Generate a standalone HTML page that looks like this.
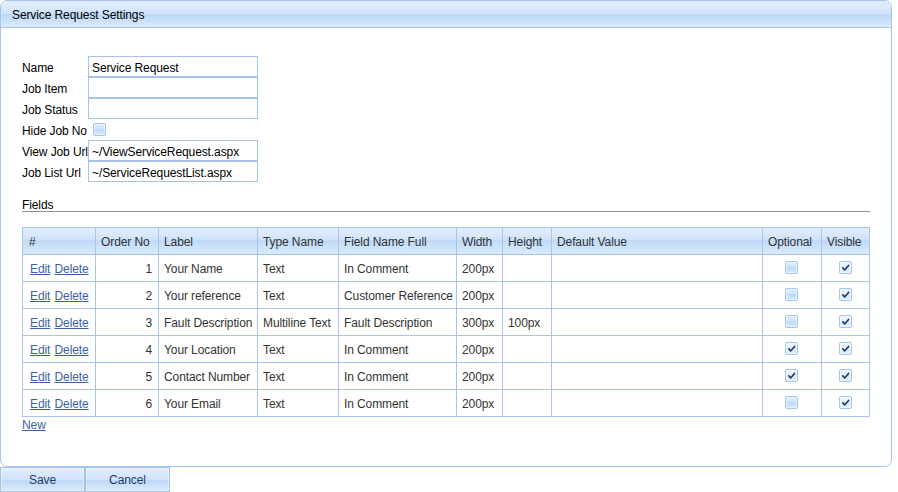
<!DOCTYPE html>
<html>
<head>
<meta charset="utf-8">
<style>
html,body{margin:0;padding:0;}
body{width:898px;height:492px;overflow:hidden;background:#fff;position:relative;
  font-family:"Liberation Sans",sans-serif;font-size:12px;letter-spacing:-0.1px;color:#000;}
.abs{position:absolute;}
.panel{position:absolute;left:0;top:0;width:890px;height:465px;border:1px solid #a5c3ec;
  border-radius:7px;background:#fff;overflow:hidden;}
.hdr{position:absolute;left:0;top:0;width:890px;height:26px;border-bottom:1px solid #a5c3ec;
  background:linear-gradient(to bottom,#e3eefd 0px,#d9e8fc 7px,#d0e3fa 13px,#bcd7f6 13px,#c6def8 18px,#dcebfd 26px);}
.hdr span{position:absolute;left:11px;top:1px;line-height:27px;color:#000;}
.lbl{position:absolute;left:22px;height:21px;line-height:21px;white-space:nowrap;}
.inp{position:absolute;left:88px;width:168px;height:19px;border:1px solid #a8c3ea;background:#fff;}
.inp span{position:absolute;left:3px;top:1px;line-height:20px;white-space:nowrap;}
.cb{position:absolute;width:11px;height:11px;border:1px solid #a3c6ee;border-radius:2px;
  background:linear-gradient(to bottom,#dfecfd 0px,#d0e4fb 5px,#b9d6f7 5px,#c5ddf9 7px,#d9e9fc 11px);box-shadow:inset 0 0 0 1px rgba(255,255,255,0.5);}
.cb svg{position:absolute;left:0;top:0;}
.cb.v{background:linear-gradient(to bottom,#eef5fd 0px,#e4eefc 5px,#d8e7fa 6px,#e2edfc 11px);}
.fields{position:absolute;left:22px;top:198px;line-height:14px;}
.fline{position:absolute;left:22px;top:211px;width:848px;height:1px;background:#939393;}
table.g{position:absolute;left:22px;top:227px;border-collapse:collapse;table-layout:fixed;}
table.g td,table.g th{border:1px solid #a9c4ea;padding:2px 0 0 5px;height:24px;font-weight:normal;
  text-align:left;white-space:nowrap;overflow:hidden;color:#333;line-height:24px;position:relative;}
table.g th{background:linear-gradient(to bottom,#e3eefd 0px,#d9e8fc 6px,#d0e3fa 11px,#bed8f6 12px,#c8dff8 16px,#dcebfd 26px);color:#333;}
table.g td.r{text-align:right;padding:2px 6px 0 0;}
table.g th:first-child{padding-left:6px;}
table.g td:first-child{padding-left:7px;word-spacing:1px;}
a{color:#3d61a9;text-decoration:underline;}
.btn{position:absolute;top:467px;height:23px;width:83px;border:1px solid #a8c3ea;
  background:linear-gradient(to bottom,#e3eefd 0px,#d9e8fc 6px,#d0e3fa 12px,#bed8f6 12px,#c8dff8 16px,#dcebfd 23px);box-shadow:inset 0 0 0 1px rgba(255,255,255,0.35);
  text-align:center;line-height:24px;color:#1e3a6e;}
</style>
</head>
<body>
<div class="panel">
  <div class="hdr"><span>Service Request Settings</span></div>
</div>

<div class="lbl" style="top:58px">Name</div>
<div class="lbl" style="top:79px">Job Item</div>
<div class="lbl" style="top:100px">Job Status</div>
<div class="lbl" style="top:121px">Hide Job No</div>
<div class="lbl" style="top:142px">View Job Url</div>
<div class="lbl" style="top:163px">Job List Url</div>

<div class="inp" style="top:56px"><span>Service Request</span></div>
<div class="inp" style="top:77px"></div>
<div class="inp" style="top:98px"></div>
<div class="cb" style="left:93px;top:123px"></div>
<div class="inp" style="top:140px"><span>~/ViewServiceRequest.aspx</span></div>
<div class="inp" style="top:161px"><span>~/ServiceRequestList.aspx</span></div>

<div class="fields">Fields</div>
<div class="fline"></div>

<table class="g">
<colgroup>
<col style="width:73px"><col style="width:63px"><col style="width:99px"><col style="width:81px"><col style="width:118px"><col style="width:46px"><col style="width:49px"><col style="width:211px"><col style="width:59px"><col style="width:48px">
</colgroup>
<tr><th>#</th><th>Order No</th><th>Label</th><th>Type Name</th><th>Field Name Full</th><th>Width</th><th>Height</th><th>Default Value</th><th>Optional</th><th>Visible</th></tr>
<tr><td><a>Edit</a> <a>Delete</a></td><td class="r">1</td><td>Your Name</td><td>Text</td><td>In Comment</td><td>200px</td><td></td><td></td><td><div class="cb" style="left:22px;top:6px"></div></td><td><div class="cb v" style="left:17px;top:6px"><svg width="11" height="11" viewBox="0 0 11 11"><path d="M2.8 5.8 L4.6 8.0 L8.6 3.4" fill="none" stroke="#1d3c66" stroke-width="1.6" stroke-linecap="round" stroke-linejoin="round"/></svg></div></td></tr>
<tr><td><a>Edit</a> <a>Delete</a></td><td class="r">2</td><td>Your reference</td><td>Text</td><td>Customer Reference</td><td>200px</td><td></td><td></td><td><div class="cb" style="left:22px;top:6px"></div></td><td><div class="cb v" style="left:17px;top:6px"><svg width="11" height="11" viewBox="0 0 11 11"><path d="M2.8 5.8 L4.6 8.0 L8.6 3.4" fill="none" stroke="#1d3c66" stroke-width="1.6" stroke-linecap="round" stroke-linejoin="round"/></svg></div></td></tr>
<tr><td><a>Edit</a> <a>Delete</a></td><td class="r">3</td><td>Fault Description</td><td>Multiline Text</td><td>Fault Description</td><td>300px</td><td>100px</td><td></td><td><div class="cb" style="left:22px;top:6px"></div></td><td><div class="cb v" style="left:17px;top:6px"><svg width="11" height="11" viewBox="0 0 11 11"><path d="M2.8 5.8 L4.6 8.0 L8.6 3.4" fill="none" stroke="#1d3c66" stroke-width="1.6" stroke-linecap="round" stroke-linejoin="round"/></svg></div></td></tr>
<tr><td><a>Edit</a> <a>Delete</a></td><td class="r">4</td><td>Your Location</td><td>Text</td><td>In Comment</td><td>200px</td><td></td><td></td><td><div class="cb v" style="left:22px;top:6px"><svg width="11" height="11" viewBox="0 0 11 11"><path d="M2.8 5.8 L4.6 8.0 L8.6 3.4" fill="none" stroke="#1d3c66" stroke-width="1.6" stroke-linecap="round" stroke-linejoin="round"/></svg></div></td><td><div class="cb v" style="left:17px;top:6px"><svg width="11" height="11" viewBox="0 0 11 11"><path d="M2.8 5.8 L4.6 8.0 L8.6 3.4" fill="none" stroke="#1d3c66" stroke-width="1.6" stroke-linecap="round" stroke-linejoin="round"/></svg></div></td></tr>
<tr><td><a>Edit</a> <a>Delete</a></td><td class="r">5</td><td>Contact Number</td><td>Text</td><td>In Comment</td><td>200px</td><td></td><td></td><td><div class="cb v" style="left:22px;top:6px"><svg width="11" height="11" viewBox="0 0 11 11"><path d="M2.8 5.8 L4.6 8.0 L8.6 3.4" fill="none" stroke="#1d3c66" stroke-width="1.6" stroke-linecap="round" stroke-linejoin="round"/></svg></div></td><td><div class="cb v" style="left:17px;top:6px"><svg width="11" height="11" viewBox="0 0 11 11"><path d="M2.8 5.8 L4.6 8.0 L8.6 3.4" fill="none" stroke="#1d3c66" stroke-width="1.6" stroke-linecap="round" stroke-linejoin="round"/></svg></div></td></tr>
<tr><td><a>Edit</a> <a>Delete</a></td><td class="r">6</td><td>Your Email</td><td>Text</td><td>In Comment</td><td>200px</td><td></td><td></td><td><div class="cb" style="left:22px;top:6px"></div></td><td><div class="cb v" style="left:17px;top:6px"><svg width="11" height="11" viewBox="0 0 11 11"><path d="M2.8 5.8 L4.6 8.0 L8.6 3.4" fill="none" stroke="#1d3c66" stroke-width="1.6" stroke-linecap="round" stroke-linejoin="round"/></svg></div></td></tr>
</table>

<div class="abs" style="left:22px;top:418px;line-height:14px"><a>New</a></div>

<div class="btn" style="left:0">Save</div>
<div class="btn" style="left:85px">Cancel</div>
</body>
</html>
